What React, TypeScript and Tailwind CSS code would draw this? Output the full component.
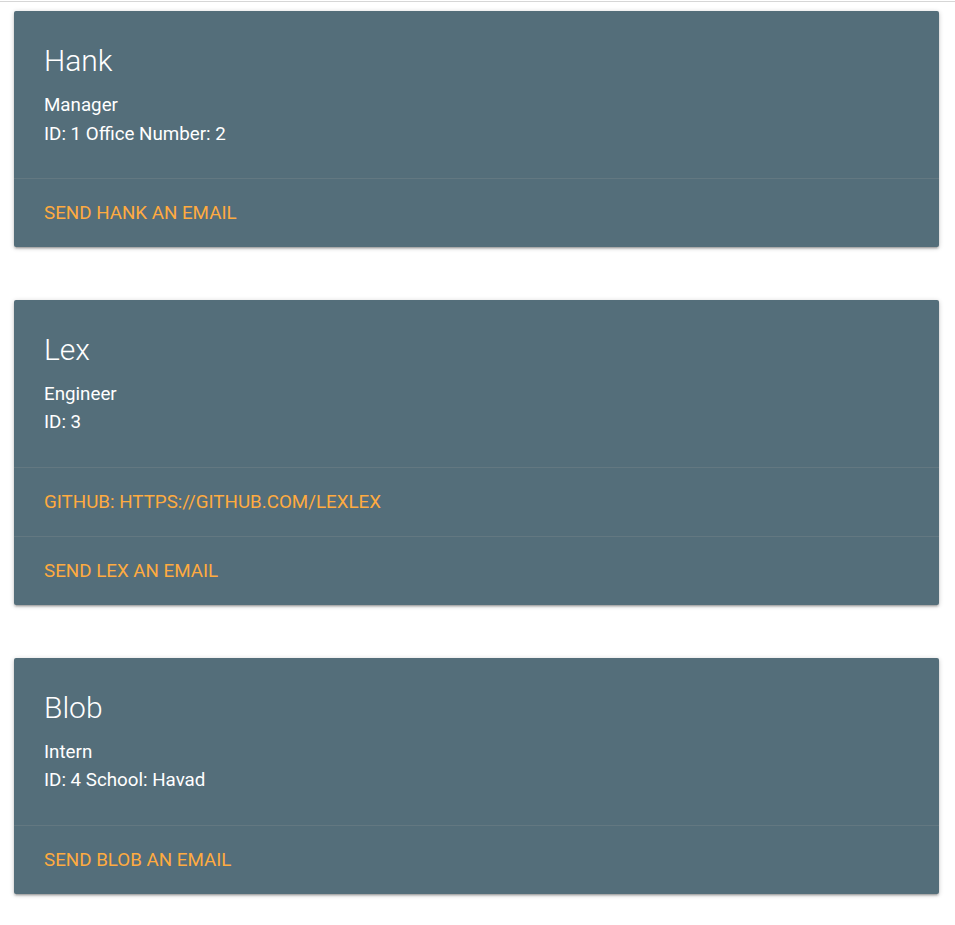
import React from "react";

type Emp = { name: string; role: string; info: string; github?: string };

const employees: Emp[] = [
  { name: "Hank", role: "Manager", info: "ID: 1 Office Number: 2" },
  { name: "Lex", role: "Engineer", info: "ID: 3", github: "https://github.com/lexlex" },
  { name: "Blob", role: "Intern", info: "ID: 4 School: Havad" },
];

function Card({ e }: { e: Emp }) {
  return (
    <div className="w-[925px] rounded-[2px] bg-[#546e7a] text-white mb-[53.5px] shadow-[0_2px_2px_0_rgba(0,0,0,0.14),0_3px_1px_-2px_rgba(0,0,0,0.12),0_1px_5px_0_rgba(0,0,0,0.2)]">
      <div className="px-[30px] pt-[30px] pb-[30px]">
        <div
          className="text-[30px] font-light leading-[40px] mb-[10px]"
          style={{ fontFamily: "'Roboto Light', Roboto, sans-serif" }}
        >
          {e.name}
        </div>
        <p className="text-[18.75px] leading-[28.125px]">{e.role}</p>
        <p className="text-[18.75px] leading-[28.125px]">{e.info}</p>
      </div>
      {e.github && (
        <div className="border-t border-[rgba(160,160,160,0.2)] px-[30px] py-[20px]">
          <a className="text-[18.75px] leading-[28.125px] uppercase text-[#ffab40] block">
            GitHub: {e.github}
          </a>
        </div>
      )}
      <div className="border-t border-[rgba(160,160,160,0.2)] px-[30px] py-[20px]">
        <a className="text-[18.75px] leading-[28.125px] uppercase text-[#ffab40] block">
          Send {e.name} an email
        </a>
      </div>
    </div>
  );
}

export default function App() {
  return (
    <div className="min-h-[925px] bg-white" style={{ fontFamily: "Roboto, 'Noto Sans', sans-serif" }}>
      <div className="mt-px h-px bg-[#d6d6d6]" />
      <div className="pt-[9.4px] pl-[14px]">
        {employees.map((e) => (
          <Card key={e.name} e={e} />
        ))}
      </div>
    </div>
  );
}
